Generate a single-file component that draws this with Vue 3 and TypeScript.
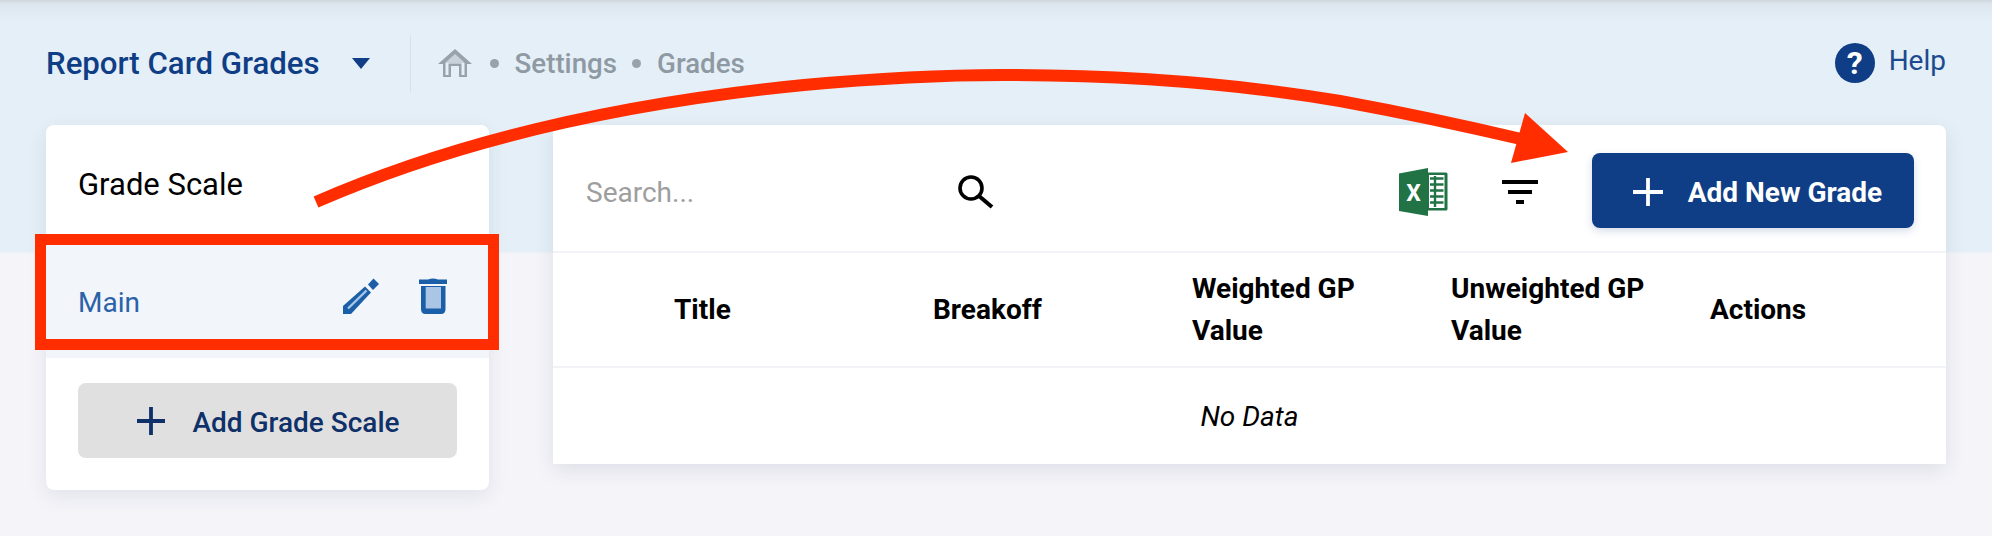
<script setup lang="ts">
const columns = [
  { key: 'title', label: 'Title' },
  { key: 'breakoff', label: 'Breakoff' },
  { key: 'weighted', label: 'Weighted GP Value' },
  { key: 'unweighted', label: 'Unweighted GP Value' },
  { key: 'actions', label: 'Actions' },
]
</script>

<template>
  <div class="page">
    <header class="topbar">
      <div class="module">
        <span class="module-name">Report Card Grades</span>
        <span class="caret"></span>
      </div>
      <nav class="crumbs">
        <svg class="home" viewBox="0 0 34 28" aria-hidden="true">
          <path d="M17 2 L31 14 H7 H3 Z" fill="#c9d2da" />
          <path d="M17 0 L34 15 H29 V28 H21 V17 H13 V28 H5 V15 H0 Z M17 5 L7.5 13.5 V26 H10.5 V14.5 H23.5 V26 H26.5 V13.5 Z" fill="#98a2ab" fill-rule="evenodd" />
        </svg>
        <i class="dot"></i>
        <span>Settings</span>
        <i class="dot"></i>
        <span>Grades</span>
      </nav>
      <a class="help">
        <span class="help-icon">?</span>
        <span class="help-label">Help</span>
      </a>
    </header>

    <main class="content">
      <aside class="scales">
        <h2 class="scales-title">Grade Scale</h2>
        <div class="scale-row">
          <span>Main</span>
          <div class="scale-actions">
            <svg class="pencil" viewBox="0 0 36 36" aria-hidden="true">
              <path d="M25 6.500 L30.500 0.500 L36 6 L30 12 Z" fill="#1a5fa8" />
              <path d="M0 36 V28 L22 8.500 L28 14.500 L8 36 Z" fill="#1a5fa8" />
              <path d="M5 30.500 L23.500 12.500" stroke="#a9c8e6" stroke-width="2.400" />
            </svg>
            <svg class="trash" viewBox="0 0 28 36" aria-hidden="true">
              <path d="M9 1.400 Q14 -0.400 19 1.400 H28 V6 H0 V1.400 Z" fill="#1a5fa8" />
              <path d="M2 8 H26.500 V31 Q26.500 36 22 36 H6.500 Q2 36 2 31 Z" fill="#1a5fa8" />
              <rect x="6.700" y="9" width="15.300" height="21.500" fill="#aac6e4" />
            </svg>
          </div>
        </div>
        <button class="add-scale">
          <svg class="plus" viewBox="0 0 28 28" aria-hidden="true">
            <path d="M14 0 V28 M0 14 H28" stroke="currentColor" stroke-width="3.800" />
          </svg>
          <span class="btn-label">Add Grade Scale</span>
        </button>
      </aside>

      <section class="grades">
        <div class="toolbar">
          <input class="search" placeholder="Search..." />
          <svg class="search-icon" viewBox="0 0 38 38" aria-hidden="true">
            <circle cx="15" cy="14" r="11" fill="none" stroke="#000" stroke-width="3.600" />
            <path d="M23 22 L36 33" stroke="#000" stroke-width="4" />
          </svg>
          <svg class="excel" viewBox="0 0 49 48" aria-hidden="true">
            <path d="M29 4.500 H47 Q48.500 4.500 48.500 6 V41 Q48.500 42.500 47 42.500 H29 Z" fill="#217346" />
            <path d="M30 7 H45.500 V40 H30 Z" fill="#fff" />
            <path d="M31 10.500 H44.500 M31 16.500 H44.500 M31 22.500 H44.500 M31 28.500 H44.500 M31 34.500 H44.500 M36 8 V39" stroke="#217346" stroke-width="2.400" />
            <path d="M0 5.500 L29 0 V48 L0 43 Z" fill="#217346" />
            <text x="14.500" y="33" text-anchor="middle" class="excel-x">X</text>
          </svg>
          <div class="filter" aria-hidden="true">
            <i class="bar bar-l"></i>
            <i class="bar bar-m"></i>
            <i class="bar bar-s"></i>
          </div>
          <button class="add-grade">
            <svg class="plus plus-lg" viewBox="0 0 30 28" aria-hidden="true">
              <path d="M15 0 V28 M0 14 H30" stroke="currentColor" stroke-width="3.800" />
            </svg>
            <span class="btn-label">Add New Grade</span>
          </button>
        </div>
        <div class="thead">
          <div v-for="col in columns" :key="col.key" class="th">
            <span>{{ col.label }}</span>
          </div>
        </div>
        <div class="empty">No Data</div>
      </section>
    </main>

    <!-- Annotation laid over the screenshot: box around the row, arrow to the button -->
    <div class="callout-box"></div>
    <svg class="callout-arrow" viewBox="0 0 1992 536" aria-hidden="true">
      <path d="M316 202 C 440 148, 600 105, 804 85 C 870 79, 940 75, 1002 75 C 1120 75, 1240 84, 1340 101 C 1400 112, 1470 127, 1525 140" fill="none" stroke="#ff2d00" stroke-width="12" />
      <path d="M1525 113 L1568 152 L1511 163 Z" fill="#ff2d00" />
    </svg>
  </div>
</template>

<style scoped>
.page {
  position: relative;
  width: 1992px;
  height: 536px;
  overflow: hidden;
  font-family: Roboto, 'Liberation Sans', sans-serif;
  background:
    linear-gradient(#cfd6dc 0, #dde6ee 4px, #e4eff7 22px, #e4eff7 252px, #edf1f6 252px, #f4f4f9 254px);
}

.topbar {
  display: flex;
  align-items: center;
  height: 125px;
  padding: 1px 46px 0 46px;
  box-sizing: border-box;
}

.module {
  display: flex;
  align-items: center;
  gap: 32px;
  height: 57px;
  padding-right: 40px;
  border-right: 1px solid #d6e1ea;
}

.module-name {
  font-size: 31.200px;
  font-weight: 500;
  color: #0f3e86;
}

.caret {
  width: 0;
  height: 0;
  border-left: 9px solid transparent;
  border-right: 9px solid transparent;
  border-top: 11px solid #0f3e86;
}

.crumbs {
  display: flex;
  align-items: center;
  margin-left: 27px;
  font-size: 27.700px;
  font-weight: 500;
  color: #8f99a3;
}

.home {
  width: 34px;
  height: 28px;
  margin-right: 18px;
}

.dot {
  width: 9px;
  height: 9px;
  margin-right: 16px;
  border-radius: 50%;
  background: #98a2ab;
}

.crumbs span {
  margin-right: 15px;
}

.help {
  display: flex;
  align-items: center;
  gap: 14px;
  margin-left: auto;
  font-size: 28px;
  color: #1c4a8f;
}

.help-label {
  margin-top: -6px;
}

.help-icon {
  display: flex;
  align-items: center;
  justify-content: center;
  width: 40px;
  height: 40px;
  border-radius: 50%;
  background: #0f3e86;
  color: #fff;
  font-size: 32px;
  font-weight: 700;
}

.content {
  display: flex;
  align-items: flex-start;
  gap: 64px;
  padding: 0 46px;
}

.scales {
  flex: 0 0 443px;
  height: 365px;
  background: #fff;
  border-radius: 8px;
  box-shadow: 0 6px 20px rgba(40, 50, 80, 0.09);
}

.scales-title {
  height: 115px;
  margin: 0;
  padding: 43px 0 0 32px;
  box-sizing: border-box;
  font-size: 31px;
  line-height: 34px;
  font-weight: 400;
  color: #000;
}

.scale-row {
  display: flex;
  align-items: center;
  justify-content: space-between;
  box-sizing: border-box;
  height: 118px;
  padding: 6px 42px 0 32px;
  background: #f2f6fb;
  font-size: 28px;
  color: #2a62a8;
}

.scale-actions {
  display: flex;
  align-items: center;
  gap: 40px;
  margin-bottom: 12px;
}

.pencil {
  width: 36px;
  height: 36px;
}

.trash {
  width: 28px;
  height: 36px;
}

.add-scale {
  display: flex;
  align-items: center;
  justify-content: center;
  gap: 27px;
  width: 379px;
  height: 75px;
  margin: 25px 0 0 32px;
  padding: 0 0 0 2px;
  border: 0;
  border-radius: 8px;
  background: #e0e0e0;
  color: #0f3068;
  font-family: inherit;
  font-size: 28px;
  font-weight: 500;
}

.btn-label {
  margin-top: 4px;
}

.plus {
  width: 28px;
  height: 28px;
}

.plus-lg {
  width: 30px;
  margin-top: 2px;
}

.grades {
  flex: 1;
  height: 339px;
  background: #fff;
  border-radius: 8px 8px 0 0;
  box-shadow: 0 6px 20px rgba(40, 50, 80, 0.1);
}

.toolbar {
  display: flex;
  align-items: center;
  box-sizing: border-box;
  height: 128px;
  padding: 7px 32px 0 33px;
  border-bottom: 2px solid #f1f3f7;
}

.search {
  width: 370px;
  height: 40px;
  padding: 2px 0 0;
  border: 0;
  outline: 0;
  font-family: inherit;
  font-size: 28px;
  color: #333;
}

.search::placeholder {
  color: #9e9e9e;
}

.search-icon {
  width: 38px;
  height: 38px;
  margin-top: 2px;
}

.excel {
  width: 49px;
  height: 48px;
  margin-left: auto;
}

.excel-x {
  font-family: Roboto, sans-serif;
  font-size: 23px;
  font-weight: 700;
  fill: #fff;
}

.filter {
  display: flex;
  flex-direction: column;
  align-items: center;
  gap: 6px;
  margin: 0 54px;
  width: 36px;
}

.bar {
  display: block;
  height: 4px;
  background: #000;
}

.bar-l {
  width: 36px;
}

.bar-m {
  width: 24px;
}

.bar-s {
  width: 8px;
}

.add-grade {
  display: flex;
  align-items: center;
  justify-content: center;
  gap: 25px;
  width: 322px;
  height: 75px;
  margin-top: -2px;
  padding: 0 0 0 9px;
  border: 0;
  border-radius: 8px;
  background: #0f3e86;
  color: #fff;
  font-family: inherit;
  font-size: 28px;
  font-weight: 700;
  box-shadow: 0 3px 8px rgba(15, 62, 134, 0.18);
}

.thead {
  display: grid;
  grid-template-columns: repeat(4, 259px) 1fr;
  align-items: center;
  box-sizing: border-box;
  height: 115px;
  padding-left: 121px;
  border-bottom: 2px solid #f1f3f7;
}

.th {
  max-width: 210px;
  font-size: 28px;
  line-height: 42px;
  font-weight: 700;
  color: #000;
}

.empty {
  display: flex;
  align-items: center;
  justify-content: center;
  height: 97px;
  font-size: 28px;
  font-style: italic;
  color: #000;
}

.callout-box {
  position: absolute;
  left: 35px;
  top: 234px;
  width: 464px;
  height: 116px;
  box-sizing: border-box;
  border: 11px solid #ff2d00;
}

.callout-arrow {
  position: absolute;
  left: 0;
  top: 0;
  width: 1992px;
  height: 536px;
  pointer-events: none;
}
</style>
